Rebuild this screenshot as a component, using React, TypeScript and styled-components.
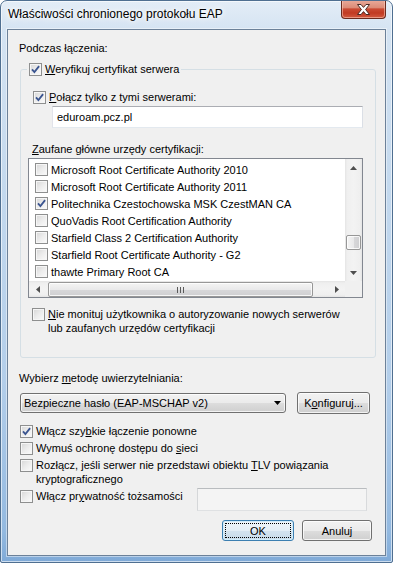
import React from "react";
import styled, { createGlobalStyle } from "styled-components";

const GlobalStyle = createGlobalStyle`
  html, body { margin: 0; padding: 0; background: #ffffff; }
  body {
    font-family: "Liberation Sans", Arial, sans-serif;
    font-size: 11px;
    color: #000;
  }
  * { box-sizing: border-box; }
`;

const Window = styled.div`
  width: 393px;
  height: 563px;
  display: flex;
  flex-direction: column;
  border: 1px solid #4f6f91;
  border-radius: 7px 7px 2px 2px;
  padding: 0 6px 6px 6px;
  background: linear-gradient(
    180deg,
    #e3edf7 0px,
    #d4e3f2 30px,
    #c4d9ee 180px,
    #b3ceea 380px,
    #93b9e0 530px,
    #7ea9d7 563px
  );
  box-shadow: inset 0 0 0 1px rgba(255, 255, 255, 0.6);
  overflow: hidden;
`;

const TitleBar = styled.div`
  flex: none;
  height: 28px;
  display: flex;
  align-items: flex-start;
  justify-content: space-between;
  padding-left: 1px;
`;

const Title = styled.div`
  margin-top: 6px;
  font-size: 12px;
  line-height: 15px;
  color: #000;
  text-shadow: 0 0 6px #fff, 0 0 10px #fff, 0 0 3px #fff;
`;

const CloseButton = styled.div`
  width: 45px;
  height: 19px;
  margin-top: -1px;
  border: 1px solid #6a2a1e;
  border-top: none;
  border-radius: 0 0 4px 4px;
  background: linear-gradient(
    180deg,
    #eaab9b 0%,
    #dc8c78 42%,
    #ca4a33 50%,
    #c13a22 72%,
    #d35a40 100%
  );
  box-shadow: inset 0 0 0 1px rgba(255, 205, 190, 0.55);
  display: flex;
  align-items: center;
  justify-content: center;
`;

const CloseGlyph = styled.svg`
  display: block;
  width: 13px;
  height: 11px;
`;

const Client = styled.div`
  flex: 1;
  display: flex;
  flex-direction: column;
  background: #f0f0f0;
  border: 1px solid #6c8199;
  box-shadow: 0 0 0 1px rgba(255, 255, 255, 0.45);
  padding: 11px 9px 0 12px;
`;

const SectionLabel = styled.div<{ $top?: number }>`
  margin: ${(p) => p.$top ?? 0}px 0 0 -1px;
  line-height: 15px;
  height: 15px;
`;

const Acc = styled.span`
  text-decoration: underline;
`;

const Group = styled.fieldset`
  margin: 6px 0 0 0;
  padding: 12px 12px 20px 12px;
  border: 1px solid #d5dfe5;
  border-radius: 3px;
  min-width: 0;
`;

const GroupHeader = styled.legend`
  margin-left: -6px;
  padding: 0 2px;
  height: 15px;
  display: flex;
  align-items: center;
  gap: 3px;
  line-height: 15px;
`;

const Box = styled.span`
  flex: none;
  width: 13px;
  height: 13px;
  border: 1px solid #8e8f8f;
  background: linear-gradient(135deg, #d6d6d6 0%, #ececec 50%, #fbfbfb 100%);
  box-shadow: inset 0 0 0 1px #f6f6f6;
  display: flex;
  align-items: center;
  justify-content: center;
`;

const RowBox = styled(Box)`
  margin-top: 2px;
`;

const CheckMark = styled.svg`
  display: block;
  width: 11px;
  height: 11px;
`;

const Mark = () => (
  <CheckMark viewBox="0 0 11 11">
    <path
      d="M2 5.4 L4.4 8.1 L9.1 2.1"
      fill="none"
      stroke="#3b5590"
      strokeWidth="1.8"
      strokeLinejoin="miter"
    />
  </CheckMark>
);

const CheckRow = styled.div<{ $left?: number; $top?: number }>`
  display: flex;
  align-items: flex-start;
  gap: 3px;
  margin: ${(p) => p.$top ?? 0}px 0 0 ${(p) => p.$left ?? 0}px;
`;

const CheckText = styled.span`
  padding: 1px 0 2px 0;
  line-height: 14px;
`;

const Check: React.FC<{ checked?: boolean; children: React.ReactNode; left?: number; top?: number }> = ({
  checked,
  children,
  left,
  top,
}) => (
  <CheckRow $left={left} $top={top}>
    <RowBox>{checked && <Mark />}</RowBox>
    <CheckText>{children}</CheckText>
  </CheckRow>
);

const TextBox = styled.div`
  height: 22px;
  margin-left: 19px;
  background: #fff;
  border: 1px solid;
  border-color: #abadb3 #dbdfe6 #e3e9ef #e2e3ea;
  padding: 0 4px;
  line-height: 20px;
`;

const FieldLabel = styled.div`
  margin: 14px 0 0 -1px;
  line-height: 15px;
  height: 15px;
`;

const ListBox = styled.div`
  margin: 1px 0 0 -5px;
  height: 140px;
  border: 1px solid #828790;
  background: #fff;
  display: grid;
  grid-template-columns: 1fr 17px;
  grid-template-rows: 122px 16px;
`;

const Items = styled.div`
  overflow: hidden;
  padding-top: 2px;
`;

const Item = styled.div`
  height: 17px;
  display: flex;
  align-items: center;
  gap: 3px;
  padding-left: 6px;
  white-space: nowrap;
`;

const VScroll = styled.div`
  display: flex;
  flex-direction: column;
  background: linear-gradient(90deg, #e4e4e4 0px, #efefef 2px, #f3f3f3 50%, #efefef 15px, #e4e4e4 17px);
`;

const HScroll = styled.div`
  display: flex;
  background: linear-gradient(180deg, #e4e4e4 0px, #efefef 2px, #f3f3f3 50%, #efefef 14px, #e4e4e4 16px);
`;

const ScrollCorner = styled.div`
  background: #f0f0f0;
`;

const ArrowCell = styled.div<{ $size: number }>`
  flex: none;
  width: ${(p) => p.$size}px;
  height: ${(p) => p.$size}px;
  display: flex;
  align-items: center;
  justify-content: center;
`;

const HArrowCell = styled.div`
  flex: none;
  width: 17px;
  display: flex;
  align-items: center;
  justify-content: center;
`;

const Track = styled.div`
  flex: 1;
  display: flex;
`;

const VThumb = styled.div<{ $offset: number }>`
  margin: ${(p) => p.$offset}px 0 0 1px;
  width: 15px;
  height: 15px;
  border: 1px solid #979797;
  border-radius: 2px;
  background: linear-gradient(90deg, #f4f4f4 0%, #e9e9ea 50%, #d8d8da 51%, #cfcfd1 100%);
  box-shadow: inset 0 0 0 1px rgba(255, 255, 255, 0.8);
`;

const HThumb = styled.div<{ $offset: number; $len: number }>`
  margin: 1px 0 0 ${(p) => p.$offset}px;
  width: ${(p) => p.$len}px;
  height: 15px;
  border: 1px solid #979797;
  border-radius: 2px;
  background: linear-gradient(180deg, #f4f4f4 0%, #e9e9ea 50%, #d8d8da 51%, #cfcfd1 100%);
  box-shadow: inset 0 0 0 1px rgba(255, 255, 255, 0.8);
  display: flex;
  align-items: center;
  justify-content: center;
`;

const Glyph = styled.svg`
  display: block;
`;

const UpArrow = () => (
  <Glyph width="7" height="4" viewBox="0 0 7 4">
    <polygon points="3.5,0 7,4 0,4" fill="#4e4e4e" />
  </Glyph>
);
const DownArrow = () => (
  <Glyph width="7" height="4" viewBox="0 0 7 4">
    <polygon points="0,0 7,0 3.5,4" fill="#4e4e4e" />
  </Glyph>
);
const LeftArrow = () => (
  <Glyph width="4" height="7" viewBox="0 0 4 7">
    <polygon points="4,0 4,7 0,3.5" fill="#4e4e4e" />
  </Glyph>
);
const RightArrow = () => (
  <Glyph width="4" height="7" viewBox="0 0 4 7">
    <polygon points="0,0 4,3.5 0,7" fill="#4e4e4e" />
  </Glyph>
);
const Grip = () => (
  <Glyph width="7" height="6" viewBox="0 0 7 6">
    <rect x="0" y="0" width="1" height="6" fill="#5a5a5a" />
    <rect x="3" y="0" width="1" height="6" fill="#5a5a5a" />
    <rect x="6" y="0" width="1" height="6" fill="#5a5a5a" />
  </Glyph>
);

const MethodRow = styled.div`
  margin-top: 6px;
  height: 22px;
  display: flex;
  align-items: center;
  gap: 11px;
`;

const buttonFace = `
  border: 1px solid #707070;
  border-radius: 3px;
  background: linear-gradient(180deg, #f2f2f2 0%, #ebebeb 50%, #dddddd 51%, #cfcfcf 100%);
  box-shadow: inset 0 0 0 1px rgba(255, 255, 255, 0.75);
`;

const Combo = styled.div`
  ${buttonFace}
  width: 266px;
  height: 20px;
  padding: 0 4px 0 3px;
  display: flex;
  align-items: center;
  justify-content: space-between;
  line-height: 16px;
`;

const ComboArrow = () => (
  <Glyph width="7" height="4" viewBox="0 0 7 4">
    <polygon points="0,0 7,0 3.5,4" fill="#000" />
  </Glyph>
);

const PushButton = styled.button<{ $w: number; $h: number; $default?: boolean }>`
  ${buttonFace}
  appearance: none;
  margin: 0;
  padding: 0;
  width: ${(p) => p.$w}px;
  height: ${(p) => p.$h}px;
  font: inherit;
  color: #000;
  line-height: 14px;
  text-align: center;
  ${(p) =>
    p.$default
      ? `
    border-color: #3c7fb1;
    background: linear-gradient(180deg, #eef5fa 0%, #e4eef6 50%, #d3e3ef 51%, #c8dbea 100%);
    box-shadow: inset 0 0 0 1px #d2ecfa;
    outline: 1px dotted #000;
    outline-offset: -4px;
  `
      : ""}
`;

const Options = styled.div`
  margin-top: 9px;
  display: flex;
  flex-direction: column;
`;

const PrivacyRow = styled.div`
  display: flex;
  align-items: flex-start;
  height: 23px;
`;

const DisabledBox = styled.div`
  margin-left: auto;
  margin-right: 9px;
  width: 170px;
  height: 23px;
  background: #f4f4f4;
  border: 1px solid;
  border-color: #b9bcbf #d8dadc #dfe1e3 #d5d7d9;
`;

const ButtonRow = styled.div`
  margin: 9px 4px 0 0;
  display: flex;
  justify-content: flex-end;
  gap: 8px;
`;

const certificates = [
  { name: "Microsoft Root Certificate Authority 2010", checked: false },
  { name: "Microsoft Root Certificate Authority 2011", checked: false },
  { name: "Politechnika Czestochowska MSK CzestMAN CA", checked: true },
  { name: "QuoVadis Root Certification Authority", checked: false },
  { name: "Starfield Class 2 Certification Authority", checked: false },
  { name: "Starfield Root Certificate Authority - G2", checked: false },
  { name: "thawte Primary Root CA", checked: false },
];

export default function App() {
  return (
    <>
      <GlobalStyle />
      <Window>
        <TitleBar>
          <Title>Właściwości chronionego protokołu EAP</Title>
          <CloseButton>
            <CloseGlyph viewBox="0 0 13 11">
              <polygon
                points="0.5,0.5 4,0.5 6.5,3.4 9,0.5 12.5,0.5 8.6,5.5 12.5,10.5 9,10.5 6.5,7.6 4,10.5 0.5,10.5 4.4,5.5"
                fill="#ffffff"
                stroke="#4a2a24"
                strokeWidth="1"
                strokeLinejoin="round"
              />
            </CloseGlyph>
          </CloseButton>
        </TitleBar>
        <Client>
          <SectionLabel>Podczas łączenia:</SectionLabel>
          <Group>
            <GroupHeader>
              <Box>
                <Mark />
              </Box>
              <span>
                <Acc>W</Acc>eryfikuj certyfikat serwera
              </span>
            </GroupHeader>
            <Check checked>
              <Acc>P</Acc>ołącz tylko z tymi serwerami:
            </Check>
            <TextBox>eduroam.pcz.pl</TextBox>
            <FieldLabel>
              <Acc>Z</Acc>aufane główne urzędy certyfikacji:
            </FieldLabel>
            <ListBox>
              <Items>
                {certificates.map((c) => (
                  <Item key={c.name}>
                    <Box>{c.checked && <Mark />}</Box>
                    <span>{c.name}</span>
                  </Item>
                ))}
              </Items>
              <VScroll>
                <ArrowCell $size={17}>
                  <UpArrow />
                </ArrowCell>
                <Track>
                  <VThumb $offset={59} />
                </Track>
                <ArrowCell $size={17}>
                  <DownArrow />
                </ArrowCell>
              </VScroll>
              <HScroll>
                <HArrowCell>
                  <LeftArrow />
                </HArrowCell>
                <Track>
                  <HThumb $offset={2} $len={265}>
                    <Grip />
                  </HThumb>
                </Track>
                <HArrowCell>
                  <RightArrow />
                </HArrowCell>
              </HScroll>
              <ScrollCorner />
            </ListBox>
            <Check left={-1} top={8}>
              <Acc>N</Acc>ie monituj użytkownika o autoryzowanie nowych serwerów
              <br />
              lub zaufanych urzędów certyfikacji
            </Check>
          </Group>
          <SectionLabel $top={13}>
            Wybierz <Acc>m</Acc>etodę uwierzytelniania:
          </SectionLabel>
          <MethodRow>
            <Combo>
              <span>Bezpieczne hasło (EAP-MSCHAP v2)</span>
              <ComboArrow />
            </Combo>
            <PushButton $w={73} $h={22}>
              K<Acc>o</Acc>nfiguruj...
            </PushButton>
          </MethodRow>
          <Options>
            <Check checked>
              Włącz szy<Acc>b</Acc>kie łączenie ponowne
            </Check>
            <Check>
              Wymuś ochronę dostępu do <Acc>s</Acc>ieci
            </Check>
            <Check>
              Rozłącz, jeśli serwer nie przedstawi obiektu <Acc>T</Acc>LV powiązania
              <br />
              kryptograficznego
            </Check>
            <PrivacyRow>
              <Check>
                Włącz pr<Acc>y</Acc>watność tożsamości
              </Check>
              <DisabledBox />
            </PrivacyRow>
          </Options>
          <ButtonRow>
            <PushButton $w={72} $h={21} $default>
              OK
            </PushButton>
            <PushButton $w={70} $h={21}>
              Anuluj
            </PushButton>
          </ButtonRow>
        </Client>
      </Window>
    </>
  );
}
